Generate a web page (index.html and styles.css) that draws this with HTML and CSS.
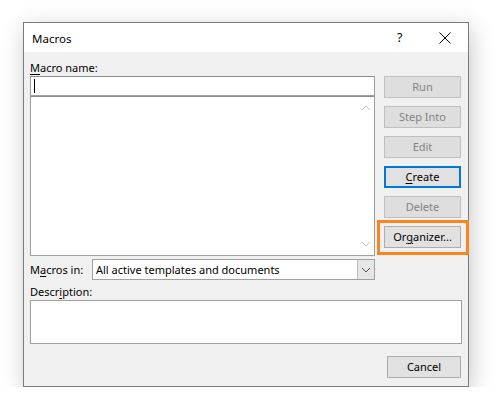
FILE: index.html
```html
<!DOCTYPE html>
<html>
<head>
<meta charset="utf-8">
<link rel="stylesheet" href="styles.css">
</head>
<body>
<div class="dialog">
  <div class="titlebar">
    <span class="title">Macros</span>
    <span class="help">?</span>
    <span class="close"><svg width="12" height="12" viewBox="0 0 12 12"><path d="M0.5 0.5 L11.5 11.5 M11.5 0.5 L0.5 11.5" stroke="#000" stroke-width="1" fill="none"/></svg></span>
  </div>
  <div class="content">
    <div class="label"><u>M</u>acro name:</div>
    <div class="main">
      <div class="left">
        <div class="input"><span class="caret"></span></div>
        <div class="list">
          <div class="scroll">
            <svg width="10" height="6" viewBox="0 0 10 6"><path d="M1 5 L5 1 L9 5" stroke="#c4c4c4" stroke-width="1" fill="none"/></svg>
            <svg width="10" height="6" viewBox="0 0 10 6"><path d="M1 1 L5 5 L9 1" stroke="#c4c4c4" stroke-width="1" fill="none"/></svg>
          </div>
        </div>
        <div class="inrow">
          <span class="inlabel">M<u>a</u>cros in:</span>
          <div class="select">
            <span class="seltext">All active templates and documents</span>
            <span class="drop"><svg width="10" height="6" viewBox="0 0 10 6"><path d="M1 1 L5 5 L9 1" stroke="#555" stroke-width="1" fill="none"/></svg></span>
          </div>
        </div>
      </div>
      <div class="buttons">
        <div class="btn disabled">Run</div>
        <div class="btn disabled">Step Into</div>
        <div class="btn disabled">Edit</div>
        <div class="btn default"><u>C</u>reate</div>
        <div class="btn disabled">Delete</div>
        <div class="highlight-wrap">
          <div class="btn">Or<u>g</u>anizer...</div>
          <span class="highlight"></span>
        </div>
      </div>
    </div>
    <div class="label desc-label">Descr<u>i</u>ption:</div>
    <div class="desc"></div>
    <div class="footer">
      <div class="btn cancel">Cancel</div>
    </div>
  </div>
</div>
</body>
</html>
```

FILE: styles.css
```css
html, body {
  margin: 0;
  padding: 0;
  background: #ffffff;
}
body {
  font-family: "Noto Sans", "Open Sans", sans-serif;
  font-size: 11px;
  color: #000;
}
u {
  text-decoration: underline;
  text-underline-offset: 2px;
}
.dialog {
  margin: 22px 0 0 23px;
  width: 446px;
  box-sizing: border-box;
  border: 1px solid #7a7a7a;
  background: #f0f0f0;
  box-shadow: 2px 6px 22px rgba(0, 0, 0, 0.22);
}
.titlebar {
  height: 29px;
  background: #ffffff;
  display: flex;
  align-items: center;
  padding-left: 8px;
}
.title {
  font-size: 11.5px;
  flex: 1;
  padding-top: 1px;
}
.help {
  font-size: 12.5px;
  width: 10px;
  margin-right: 32px;
}
.close {
  display: flex;
  width: 12px;
  margin-right: 17px;
}
.content {
  padding: 8px 7px 8px 6px;
}
.label {
  height: 16px;
  line-height: 16px;
}
.main {
  display: flex;
  gap: 9px;
}
.left {
  width: 345px;
  display: flex;
  flex-direction: column;
}
.input {
  height: 20px;
  box-sizing: border-box;
  border: 1px solid #a0a0a0;
  border-top-color: #8c8c8c;
  background: #fff;
  display: flex;
  align-items: center;
  padding-left: 3px;
}
.caret {
  width: 1px;
  height: 14px;
  background: #000;
}
.list {
  height: 160px;
  box-sizing: border-box;
  border: 1px solid #a0a0a0;
  border-top-color: #8c8c8c;
  background: #fff;
  display: flex;
  justify-content: flex-end;
}
.scroll {
  width: 17px;
  display: flex;
  flex-direction: column;
  justify-content: space-between;
  align-items: center;
  padding: 8px 0 8px;
  box-sizing: border-box;
  background: #fff;
}
.inrow {
  margin-top: 3px;
  height: 21px;
  display: flex;
  align-items: center;
}
.inlabel {
  width: 62px;
}
.select {
  flex: 1;
  height: 21px;
  box-sizing: border-box;
  border: 1px solid #a0a0a0;
  background: #fff;
  display: flex;
  align-items: center;
}
.seltext {
  flex: 1;
  padding-left: 3px;
}
.drop {
  width: 17px;
  height: 19px;
  box-sizing: border-box;
  border-left: 1px solid #bcbcbc;
  background: #e6e6e6;
  display: flex;
  align-items: center;
  justify-content: center;
}
.buttons {
  width: 77px;
  display: flex;
  flex-direction: column;
  gap: 8px;
}
.btn {
  height: 22px;
  box-sizing: border-box;
  border: 1px solid #adadad;
  background: #e1e1e1;
  display: flex;
  align-items: center;
  justify-content: center;
  padding-bottom: 1px;
}
.btn.disabled {
  color: #838383;
  border-color: #bfbfbf;
  background: #dedede;
}
.btn.default {
  border: 2px solid #0078d7;
}
.highlight-wrap {
  position: relative;
}
.highlight {
  position: absolute;
  left: -7px;
  right: -8px;
  top: -6px;
  bottom: -7px;
  border: 3px solid #f7861c;
  pointer-events: none;
}
.desc-label {
  margin-top: 4px;
}
.desc {
  width: 432px;
  height: 44px;
  box-sizing: border-box;
  border: 1px solid #a0a0a0;
  background: #fff;
}
.footer {
  margin-top: 12px;
  display: flex;
  justify-content: flex-end;
}
.cancel {
  width: 74px;
}
```
